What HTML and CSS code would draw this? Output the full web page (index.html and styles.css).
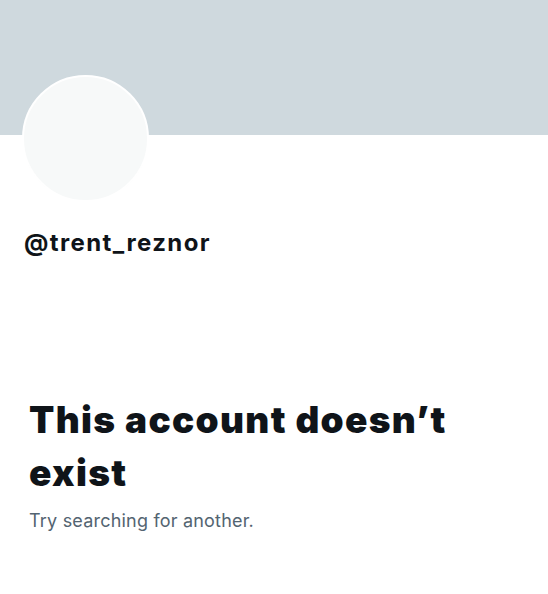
FILE: index.html
```html
<!DOCTYPE html>
<html>
<head>
<meta charset="utf-8">
<link rel="stylesheet" href="styles.css">
</head>
<body>
<div class="profile">
  <div class="banner"></div>
  <div class="header">
    <div class="avatar"></div>
    <div class="handle">@trent_reznor</div>
  </div>
  <div class="empty">
    <h1 class="title">This account doesn’t exist</h1>
    <p class="sub">Try searching for another.</p>
  </div>
</div>
</body>
</html>
```
FILE: styles.css
```css
html, body {
  margin: 0;
  padding: 0;
  background: #ffffff;
}
body {
  font-family: "Inter", "Liberation Sans", sans-serif;
  color: #0f1419;
  width: 548px;
  overflow: hidden;
}
.banner {
  height: 135px;
  background: #cfd9de;
}
.header {
  padding: 0 16px 0 24px;
}
.avatar {
  width: 123px;
  height: 123px;
  border-radius: 50%;
  background: #f7f9f9;
  border: 2px solid #ffffff;
  margin: -60px 0 0 -2px;
}
.handle {
  margin-top: 27px;
  font-size: 24px;
  font-weight: 700;
  line-height: 28px;
  letter-spacing: 1.4px;
}
.empty {
  padding: 136px 40px 0 29px;
}
.title {
  margin: 0;
  font-size: 37px;
  font-weight: 900;
  line-height: 53px;
  letter-spacing: 1.3px;
}
.sub {
  margin: 11px 0 0;
  font-size: 18px;
  line-height: 22px;
  color: #536471;
  letter-spacing: 0.2px;
}
```
